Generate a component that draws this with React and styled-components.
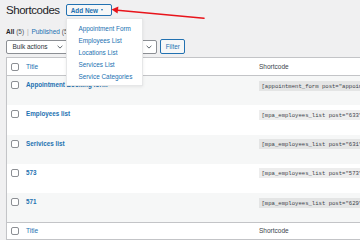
import React from 'react'
import styled, { createGlobalStyle } from 'styled-components'

const GlobalStyle = createGlobalStyle`
  html, body {
    margin: 0;
    padding: 0;
  }
  body {
    background: #f0f0f1;
    font-family: "Liberation Sans", Arial, sans-serif;
    color: #1d2327;
  }
`

const menuItems = [
  'Appointment Form',
  'Employees List',
  'Locations List',
  'Services List',
  'Service Categories',
]

const rows = [
  { title: 'Appointment Booking form', code: '[appointment_form post="appointment-form"]' },
  { title: 'Employees list', code: '[mpa_employees_list post="633"]' },
  { title: 'Serivices list', code: '[mpa_employees_list post="631"]' },
  { title: '573', code: '[mpa_employees_list post="573"]' },
  { title: '571', code: '[mpa_employees_list post="629"]' },
]

const Chevron = () => (
  <svg width="6" height="4" viewBox="0 0 6 4">
    <polyline points="0.6,0.8 3,3.1 5.4,0.8" fill="none" stroke="#50575e" strokeWidth="0.9" />
  </svg>
)

const App = () => (
  <Page>
    <GlobalStyle />
    <Header>
      <PageTitle>Shortcodes</PageTitle>
      <AddNewWrap>
        <AddNewButton>
          Add New <Caret />
        </AddNewButton>
        <Menu>
          {menuItems.map(item => (
            <MenuItem key={item}>{item}</MenuItem>
          ))}
        </Menu>
        <Arrow width="95" height="16" viewBox="0 0 95 16">
          <polygon points="0.5,4.6 7.4,1.6 6.6,8.6" fill="#e8141b" />
          <line x1="6.5" y1="5.2" x2="93" y2="13.3" stroke="#e8141b" strokeWidth="1.6" strokeLinecap="round" />
        </Arrow>
      </AddNewWrap>
    </Header>

    <SubNav>
      <Current>All</Current> <Count>(5)</Count> <Sep>|</Sep> <NavLink>Published</NavLink> <Count>(5)</Count>
    </SubNav>

    <TableNav>
      <Select width={62}>
        Bulk actions
        <Chevron />
      </Select>
      <Button>Apply</Button>
      <Select width={55}>
        All dates
        <Chevron />
      </Select>
      <Button>Filter</Button>
    </TableNav>

    <Table>
      <HeadRow>
        <CheckCell><Checkbox /></CheckCell>
        <TitleCell><HeadLink>Title</HeadLink></TitleCell>
        <CodeCell><HeadText>Shortcode</HeadText></CodeCell>
      </HeadRow>
      {rows.map((row, i) => (
        <Row key={row.title} striped={i % 2 === 0}>
          <CheckCell><Checkbox /></CheckCell>
          <TitleCell><RowTitle>{row.title}</RowTitle></TitleCell>
          <CodeCell><Code>{row.code}</Code></CodeCell>
        </Row>
      ))}
      <FootRow>
        <CheckCell><Checkbox /></CheckCell>
        <TitleCell><HeadLink>Title</HeadLink></TitleCell>
        <CodeCell><HeadText>Shortcode</HeadText></CodeCell>
      </FootRow>
    </Table>
  </Page>
)

export default App

const Page = styled.div`
  width: 360px;
  height: 240px;
  overflow: hidden;
  padding-left: 6px;
  box-sizing: border-box;
`

const Header = styled.div`
  display: flex;
  align-items: center;
  margin-top: 4px;
  height: 12px;
`

const PageTitle = styled.h1`
  margin: 0 6px 0 0;
  font-size: 11.5px;
  line-height: 12px;
  font-weight: 400;
  letter-spacing: -0.45px;
  color: #1d2327;
`

const AddNewWrap = styled.div`
  position: relative;
  z-index: 2;
`

const AddNewButton = styled.div`
  display: flex;
  align-items: center;
  gap: 2.5px;
  box-sizing: border-box;
  width: 46px;
  height: 12.5px;
  padding: 0 4px;
  border: 1px solid #2271b1;
  border-radius: 2px;
  background: #f6f7f7;
  color: #2271b1;
  font-size: 6.4px;
  font-weight: 700;
  white-space: nowrap;
`

const Caret = styled.span`
  width: 0;
  height: 0;
  border-left: 1.8px solid transparent;
  border-right: 1.8px solid transparent;
  border-top: 2.2px solid #2271b1;
`

const Menu = styled.ul`
  position: absolute;
  top: calc(100% + 2.2px);
  left: 0.7px;
  width: 77px;
  height: 67.3px;
  box-sizing: border-box;
  margin: 0;
  padding: 3.6px 0 0 11px;
  list-style: none;
  background: #fff;
  border: 1px solid #e6e7e8;
  box-shadow: 0 1px 3px rgba(0, 0, 0, 0.08);
`

const MenuItem = styled.li`
  height: 12.1px;
  line-height: 12.1px;
  font-size: 6.4px;
  color: #2271b1;
  white-space: nowrap;
`

const Arrow = styled.svg`
  position: absolute;
  left: 45px;
  top: 1px;
  overflow: visible;
`

const SubNav = styled.div`
  margin-top: 10.7px;
  height: 10px;
  line-height: 10px;
  font-size: 6.5px;
  color: #50575e;
  white-space: nowrap;
`

const Current = styled.span`
  color: #1d2327;
  font-weight: 700;
`

const Count = styled.span`
  color: #50575e;
`

const Sep = styled.span`
  color: #a7aaad;
  margin: 0 1px;
`

const NavLink = styled.span`
  color: #2271b1;
`

const TableNav = styled.div`
  display: flex;
  align-items: center;
  gap: 3.5px;
  margin-top: 2.6px;
  height: 15px;
`

const Select = styled.div`
  display: flex;
  align-items: center;
  justify-content: space-between;
  box-sizing: border-box;
  width: ${props => props.width}px;
  height: 14px;
  padding: 0 4px 0 5.5px;
  background: #fff;
  border: 1px solid #8c8f94;
  border-radius: 2px;
  font-size: 6.5px;
  color: #2c3338;
  white-space: nowrap;
`

const Button = styled.div`
  display: flex;
  align-items: center;
  box-sizing: border-box;
  height: 15px;
  padding: 0 4.5px;
  background: #f6f7f7;
  border: 1px solid #2271b1;
  border-radius: 2px;
  font-size: 6.3px;
  color: #2271b1;
`

const Table = styled.div`
  margin-top: 3px;
  width: 420px;
  background: #fff;
  border: 1px solid #c3c4c7;
  box-shadow: 0 1px 1px rgba(0, 0, 0, 0.04);
`

const BaseRow = styled.div`
  display: grid;
  grid-template-columns: 15px 232px 1fr;
  font-size: 6.5px;
  line-height: 10px;
`

const HeadRow = styled(BaseRow)`
  height: 17px;
  align-items: center;
  border-bottom: 1px solid #c3c4c7;
`

const FootRow = styled(BaseRow)`
  height: 16px;
  align-items: center;
  border-top: 1px solid #c3c4c7;
`

const Row = styled(BaseRow)`
  height: 29.2px;
  box-sizing: border-box;
  padding-top: 4px;
  align-items: start;
  background: ${props => (props.striped ? '#f6f7f7' : '#fff')};
`

const CheckCell = styled.div`
  display: flex;
  align-items: center;
  height: 10px;
  padding-left: 4px;
`

const Checkbox = styled.span`
  display: block;
  width: 8px;
  height: 8px;
  box-sizing: border-box;
  border: 1px solid #8c8f94;
  border-radius: 2px;
  background: #fff;
`

const TitleCell = styled.div`
  padding-left: 4px;
  white-space: nowrap;
`

const CodeCell = styled.div`
  padding-left: 4.5px;
  white-space: nowrap;
`

const HeadLink = styled.span`
  color: #2271b1;
`

const HeadText = styled.span`
  padding-left: 0.5px;
  color: #3c434a;
`

const RowTitle = styled.span`
  font-size: 6.3px;
  font-weight: 700;
  color: #2271b1;
`

const Code = styled.code`
  padding: 1.5px 3px;
  background: rgba(0, 0, 0, 0.07);
  font-family: "Liberation Mono", "Courier New", monospace;
  font-size: 5.6px;
  color: #3c434a;
`
